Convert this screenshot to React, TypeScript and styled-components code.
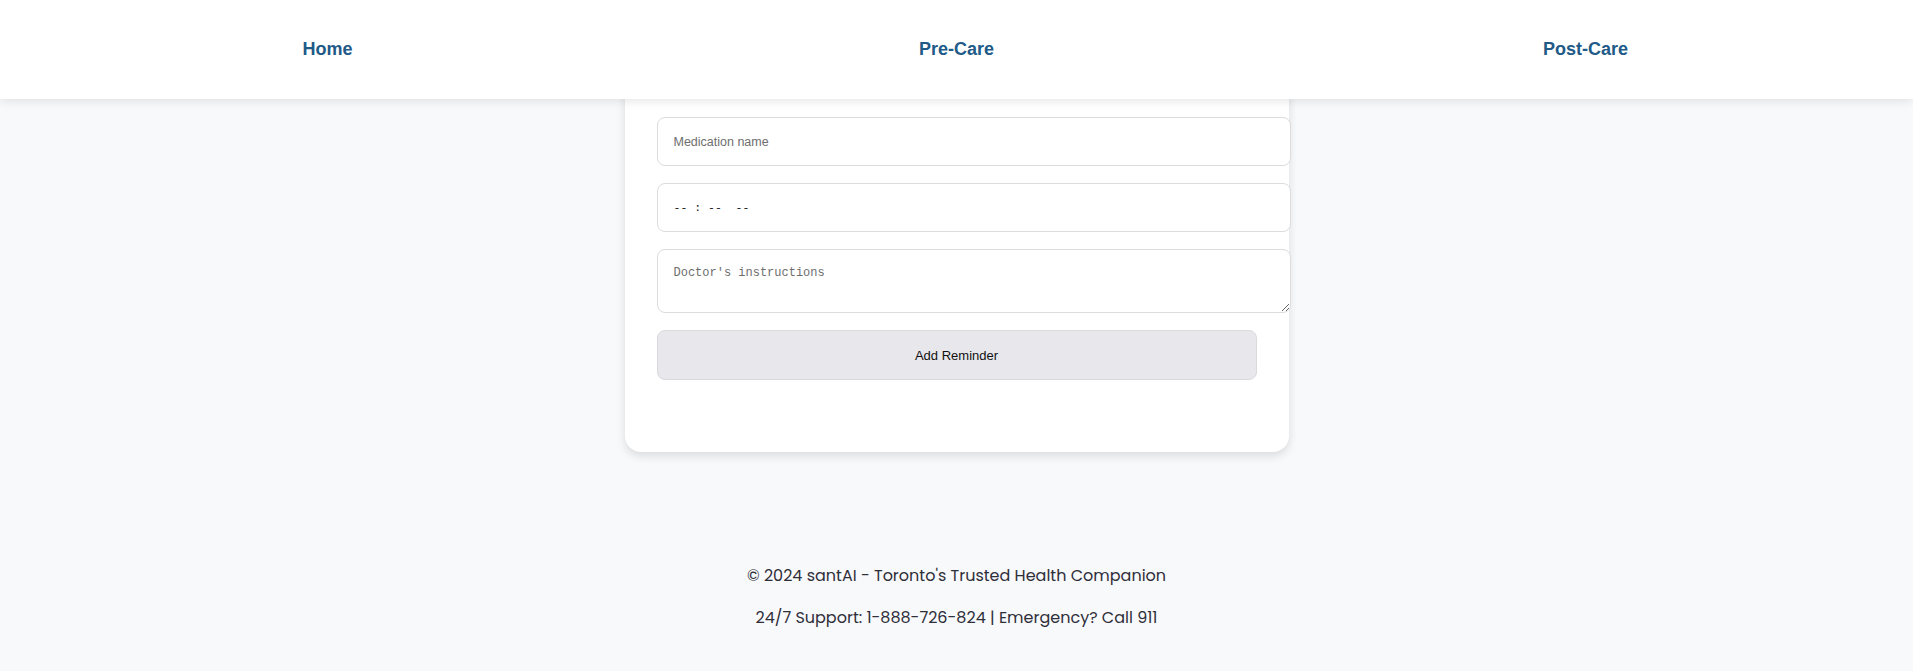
import styled, { createGlobalStyle } from "styled-components";

const GlobalStyle = createGlobalStyle`
  html, body {
    margin: 0;
    padding: 0;
    background-color: #f8f9fa;
  }
  * {
    box-sizing: border-box;
  }
`;

const Page = styled.div`
  min-height: 671px;
  display: flex;
  flex-direction: column;
  background-color: #f8f9fa;
`;

const NavBar = styled.nav`
  position: relative;
  z-index: 10;
  height: 99px;
  display: grid;
  grid-template-columns: repeat(3, 1fr);
  align-items: center;
  padding: 0 13px;
  background-color: #fff;
  box-shadow: 0 2px 10px rgba(0, 0, 0, 0.1);
`;

const NavLink = styled.a`
  justify-self: center;
  font-family: "Liberation Sans", Arial, sans-serif;
  font-weight: bold;
  font-size: 18px;
  color: #215a87;
  text-decoration: none;
  cursor: pointer;
`;

const Main = styled.main`
  display: flex;
  justify-content: center;
  margin-top: -14px;
`;

const Card = styled.div`
  width: 664px;
  padding: 32px 32px 72px;
  background-color: #fff;
  border-radius: 0 0 16px 16px;
  box-shadow: 0 4px 10px rgba(0, 0, 0, 0.12);
`;

const Form = styled.form`
  display: flex;
  flex-direction: column;
  gap: 17px;
`;

const Field = styled.input`
  box-sizing: content-box;
  width: 100%;
  height: 15px;
  padding: 16px;
  border: 1px solid #dcdcdc;
  border-radius: 8px;
  font-family: "Liberation Sans", Arial, sans-serif;
  font-size: 12.5px;
  color: #222;
  background: #fff;
  outline: none;

  &::placeholder {
    color: #6e6e6e;
  }
`;

const TimeField = styled(Field)`
  font-family: "Liberation Mono", monospace;
  font-size: 11.5px;
  color: #111;
`;

const Notes = styled.textarea`
  box-sizing: content-box;
  width: 100%;
  height: 30px;
  padding: 16px;
  border: 1px solid #dcdcdc;
  border-radius: 8px;
  font-family: "Liberation Mono", monospace;
  font-size: 12px;
  background: #fff;
  outline: none;

  &::placeholder {
    color: #6e6e6e;
  }
`;

const SubmitButton = styled.button`
  width: 100%;
  height: 50px;
  border: 1px solid #d9d9de;
  border-radius: 8px;
  background-color: #e8e8ec;
  font-family: "Liberation Sans", Arial, sans-serif;
  font-size: 13px;
  color: #111;
  cursor: pointer;
`;

const Footer = styled.footer`
  margin-top: auto;
  padding: 100px 0 41px;
  display: flex;
  flex-direction: column;
  align-items: center;
  gap: 17px;
  font-family: "Poppins", "Open Sans", sans-serif;
  font-size: 16px;
  color: #2f2f3a;
`;

const FooterLine = styled.p`
  margin: 0;
  line-height: 25px;
`;

const App = () => {
  return (
    <>
      <GlobalStyle />
      <Page>
        <NavBar>
          <NavLink>Home</NavLink>
          <NavLink>Pre-Care</NavLink>
          <NavLink>Post-Care</NavLink>
        </NavBar>
        <Main>
          <Card>
            <Form onSubmit={(e) => e.preventDefault()}>
              <Field type="text" placeholder="Medication name" />
              <TimeField type="text" defaultValue="-- : --  --" />
              <Notes placeholder="Doctor's instructions" />
              <SubmitButton type="submit">Add Reminder</SubmitButton>
            </Form>
          </Card>
        </Main>
        <Footer>
          <FooterLine>© 2024 santAI - Toronto's Trusted Health Companion</FooterLine>
          <FooterLine>24/7 Support: 1-888-726-824 | Emergency? Call 911</FooterLine>
        </Footer>
      </Page>
    </>
  );
};

export default App;
